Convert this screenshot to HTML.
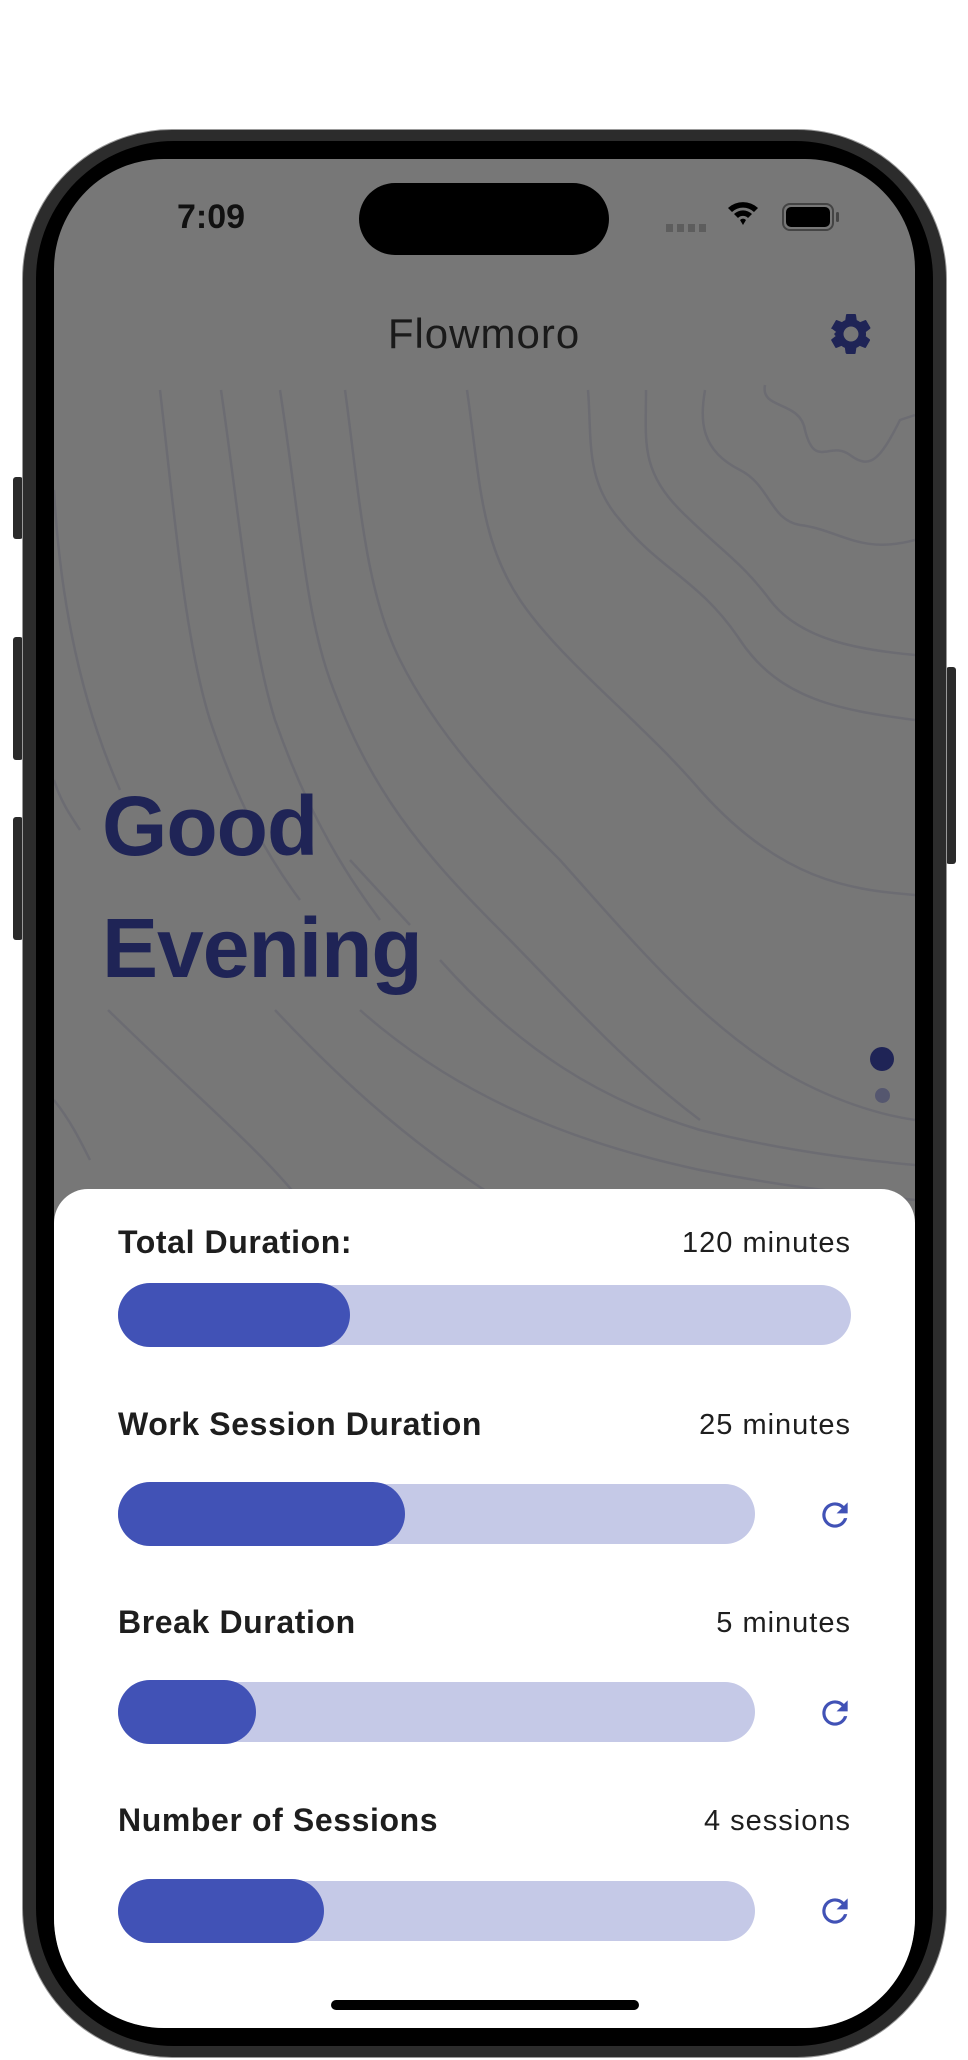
<!DOCTYPE html>
<html><head><meta charset="utf-8"><style>
*{margin:0;padding:0;box-sizing:border-box}
body{width:968px;height:2060px;background:#fff;position:relative;overflow:hidden;font-family:"Liberation Sans",sans-serif}
.abs{position:absolute}
.frame{left:22px;top:129px;width:925px;height:1929px;border-radius:150px;background:#2c2c2c;border:1px solid #999}
.bezel{left:36px;top:141px;width:897px;height:1905px;border-radius:138px;background:#000}
.screen{left:54px;top:159px;width:861px;height:1869px;border-radius:110px;background:#777;overflow:hidden}
.btn{background:#2a2a2a}
.lbl{font-size:32px;font-weight:bold;color:#1e1e1e;left:64px;letter-spacing:0.6px}
.val{font-size:29px;color:#1e1e1e;right:64px;letter-spacing:1px}
.track{background:#c5c9e7;border-radius:30px;height:60px;left:64px}
.thumb{background:#4152b6;border-radius:32px;height:64px;left:64px}
</style></head><body>
<div class="abs btn" style="left:13px;top:477px;width:10px;height:62px;border-radius:3px"></div>
<div class="abs btn" style="left:13px;top:637px;width:10px;height:123px;border-radius:3px"></div>
<div class="abs btn" style="left:13px;top:817px;width:10px;height:123px;border-radius:3px"></div>
<div class="abs btn" style="left:946px;top:667px;width:10px;height:197px;border-radius:3px"></div>
<div class="abs frame"></div>
<div class="abs bezel"></div>
<div class="abs screen">
<svg class="abs" style="left:0;top:0" width="861" height="1100" viewBox="54 159 861 1100" fill="none" stroke="#6a6a72" stroke-width="2.5" opacity="0.8">
<path d="M160 390 C175 520 185 640 210 720 C240 810 270 860 300 900"/>
<path d="M221 390 C240 520 250 640 275 720 C310 820 350 880 380 920"/>
<path d="M280 390 C300 520 305 610 330 680 C370 790 420 850 500 930 C560 990 620 1060 700 1120"/>
<path d="M345 390 C360 500 365 590 400 660 C440 740 500 800 560 860 C640 950 700 1020 780 1070 C830 1100 880 1115 915 1120"/>
<path d="M467 390 C480 480 480 540 520 600 C560 660 640 720 700 790 C780 880 850 890 915 895"/>
<path d="M588 390 C592 440 585 480 620 520 C660 570 700 580 740 640 C780 700 840 710 915 720"/>
<path d="M646 390 C646 440 640 470 680 510 C720 550 740 560 770 600 C800 640 860 650 915 655"/>
<path d="M705 390 C700 420 700 450 740 470 C770 485 770 520 800 525 C840 530 860 555 915 540"/>
<path d="M765 385 C760 410 800 400 805 430 C815 470 830 440 850 455 C870 470 880 460 900 420 L915 415"/>
<path d="M54 490 C60 600 80 700 120 790"/>
<path d="M54 780 C60 800 70 815 80 830"/>
<path d="M350 860 L410 925"/>
<path d="M440 960 C520 1050 600 1100 700 1130 C780 1150 860 1160 915 1165"/>
<path d="M108 1010 C200 1100 260 1150 300 1200"/>
<path d="M275 1010 C350 1090 420 1150 500 1200"/>
<path d="M360 1010 C450 1090 560 1140 700 1170 C800 1190 870 1195 915 1200"/>
<path d="M54 1100 C70 1120 80 1140 90 1160"/>
</svg>
</div>
<div class="abs" style="left:359px;top:183px;width:250px;height:72px;border-radius:36px;background:#000"></div>
<div class="abs" style="left:177px;top:198px;font-size:34px;font-weight:bold;color:#111">7:09</div>
<div class="abs" style="left:666px;top:224px;width:40px;height:8px;background:repeating-linear-gradient(90deg,#5d5d5d 0 7px,transparent 7px 11px)"></div>
<svg class="abs" style="left:726px;top:198px" width="34" height="30" viewBox="0 0 34 30"><path d="M2 10 A22 22 0 0 1 32 10 L28 14 A16 16 0 0 0 6 14Z M8 16 A13 13 0 0 1 26 16 L22 20 A7 7 0 0 0 12 20Z M14 22 A4 4 0 0 1 20 22 L17 27Z" fill="#000"/></svg>
<div class="abs" style="left:782px;top:203px;width:52px;height:28px;border:2px solid #444;border-radius:8px;padding:2px"><div style="width:100%;height:100%;background:#000;border-radius:5px"></div></div>
<div class="abs" style="left:836px;top:212px;width:3px;height:10px;background:#444;border-radius:2px"></div>
<div class="abs" style="left:0;width:968px;top:310px;text-align:center;font-size:42px;color:#1a1a1a;letter-spacing:1px">Flowmoro</div>
<svg class="abs" style="left:826px;top:309px" width="50" height="50" viewBox="0 0 24 24"><path fill="#1f2456" d="M19.14 12.94c.04-.3.06-.61.06-.94 0-.32-.02-.64-.07-.94l2.03-1.58a.49.49 0 0 0 .12-.61l-1.92-3.32a.49.49 0 0 0-.59-.22l-2.39.96c-.5-.38-1.03-.7-1.62-.94l-.36-2.54a.48.48 0 0 0-.48-.41h-3.84c-.24 0-.43.17-.47.41l-.36 2.54c-.59.24-1.130.57-1.62.94l-2.39-.96a.48.48 0 0 0-.59.22L2.74 8.87c-.12.21-.8.47.12.61l2.03 1.58c-.5.3-.9.63-.9.94s.2.64.7.94l-2.03 1.58a.49.49 0 0 0-.12.61l1.92 3.32c.12.22.37.29.59.22l2.39-.96c.5.38 1.03.7 1.62.94l.36 2.54c.5.24.24.41.48.41h3.84c.24 0 .44-.17.47-.41l.36-2.54c.59-.24 1.13-.56 1.62-.94l2.39.96c.22.08.47 0 .59-.22l1.92-3.32c.12-.22.07-.47-.12-.61l-2.01-1.58zM12 15.6c-1.98 0-3.6-1.62-3.6-3.6s1.62-3.6 3.6-3.6 3.6 1.62 3.6 3.6-1.62 3.6-3.6 3.6z"/></svg>
<div class="abs" style="left:102px;top:765px;font-size:84px;line-height:122px;color:#1f2456;font-weight:bold;letter-spacing:-1px">Good<br>Evening</div>
<div class="abs" style="left:870px;top:1047px;width:24px;height:24px;border-radius:50%;background:#1f2456"></div>
<div class="abs" style="left:875px;top:1088px;width:15px;height:15px;border-radius:50%;background:#55576f"></div>
<div class="abs" style="left:54px;top:1189px;width:861px;height:839px;background:#fff;border-radius:34px 34px 110px 110px">
<div class="abs lbl" style="top:35px">Total Duration:</div><div class="abs val" style="top:38px">120 minutes</div>
<div class="abs track" style="top:96px;width:733px"></div><div class="abs thumb" style="top:94px;width:232px"></div>
<div class="abs lbl" style="top:217px">Work Session Duration</div><div class="abs val" style="top:220px">25 minutes</div>
<div class="abs track" style="top:295px;width:637px"></div><div class="abs thumb" style="top:293px;width:287px"></div>
<div class="abs lbl" style="top:415px">Break Duration</div><div class="abs val" style="top:418px">5 minutes</div>
<div class="abs track" style="top:493px;width:637px"></div><div class="abs thumb" style="top:491px;width:138px"></div>
<div class="abs lbl" style="top:613px">Number of Sessions</div><div class="abs val" style="top:616px">4 sessions</div>
<div class="abs track" style="top:692px;width:637px"></div><div class="abs thumb" style="top:690px;width:206px"></div>
<svg class="abs" style="left:762px;top:307px" width="38" height="38" viewBox="0 0 24 24"><path fill="#4152b6" d="M17.65 6.35A7.96 7.96 0 0 0 12 4a8 8 0 1 0 7.73 10h-2.08A6 6 0 1 1 12 6c1.66 0 3.14.69 4.22 1.78L13 11h7V4l-2.35 2.35z"/></svg>
<svg class="abs" style="left:762px;top:505px" width="38" height="38" viewBox="0 0 24 24"><path fill="#4152b6" d="M17.65 6.35A7.96 7.96 0 0 0 12 4a8 8 0 1 0 7.73 10h-2.08A6 6 0 1 1 12 6c1.66 0 3.14.69 4.22 1.78L13 11h7V4l-2.35 2.35z"/></svg>
<svg class="abs" style="left:762px;top:703px" width="38" height="38" viewBox="0 0 24 24"><path fill="#4152b6" d="M17.65 6.35A7.96 7.96 0 0 0 12 4a8 8 0 1 0 7.73 10h-2.08A6 6 0 1 1 12 6c1.66 0 3.14.69 4.22 1.78L13 11h7V4l-2.35 2.35z"/></svg>
</div>
<div class="abs" style="left:331px;top:2000px;width:308px;height:10px;border-radius:5px;background:#000"></div>
</body></html>
